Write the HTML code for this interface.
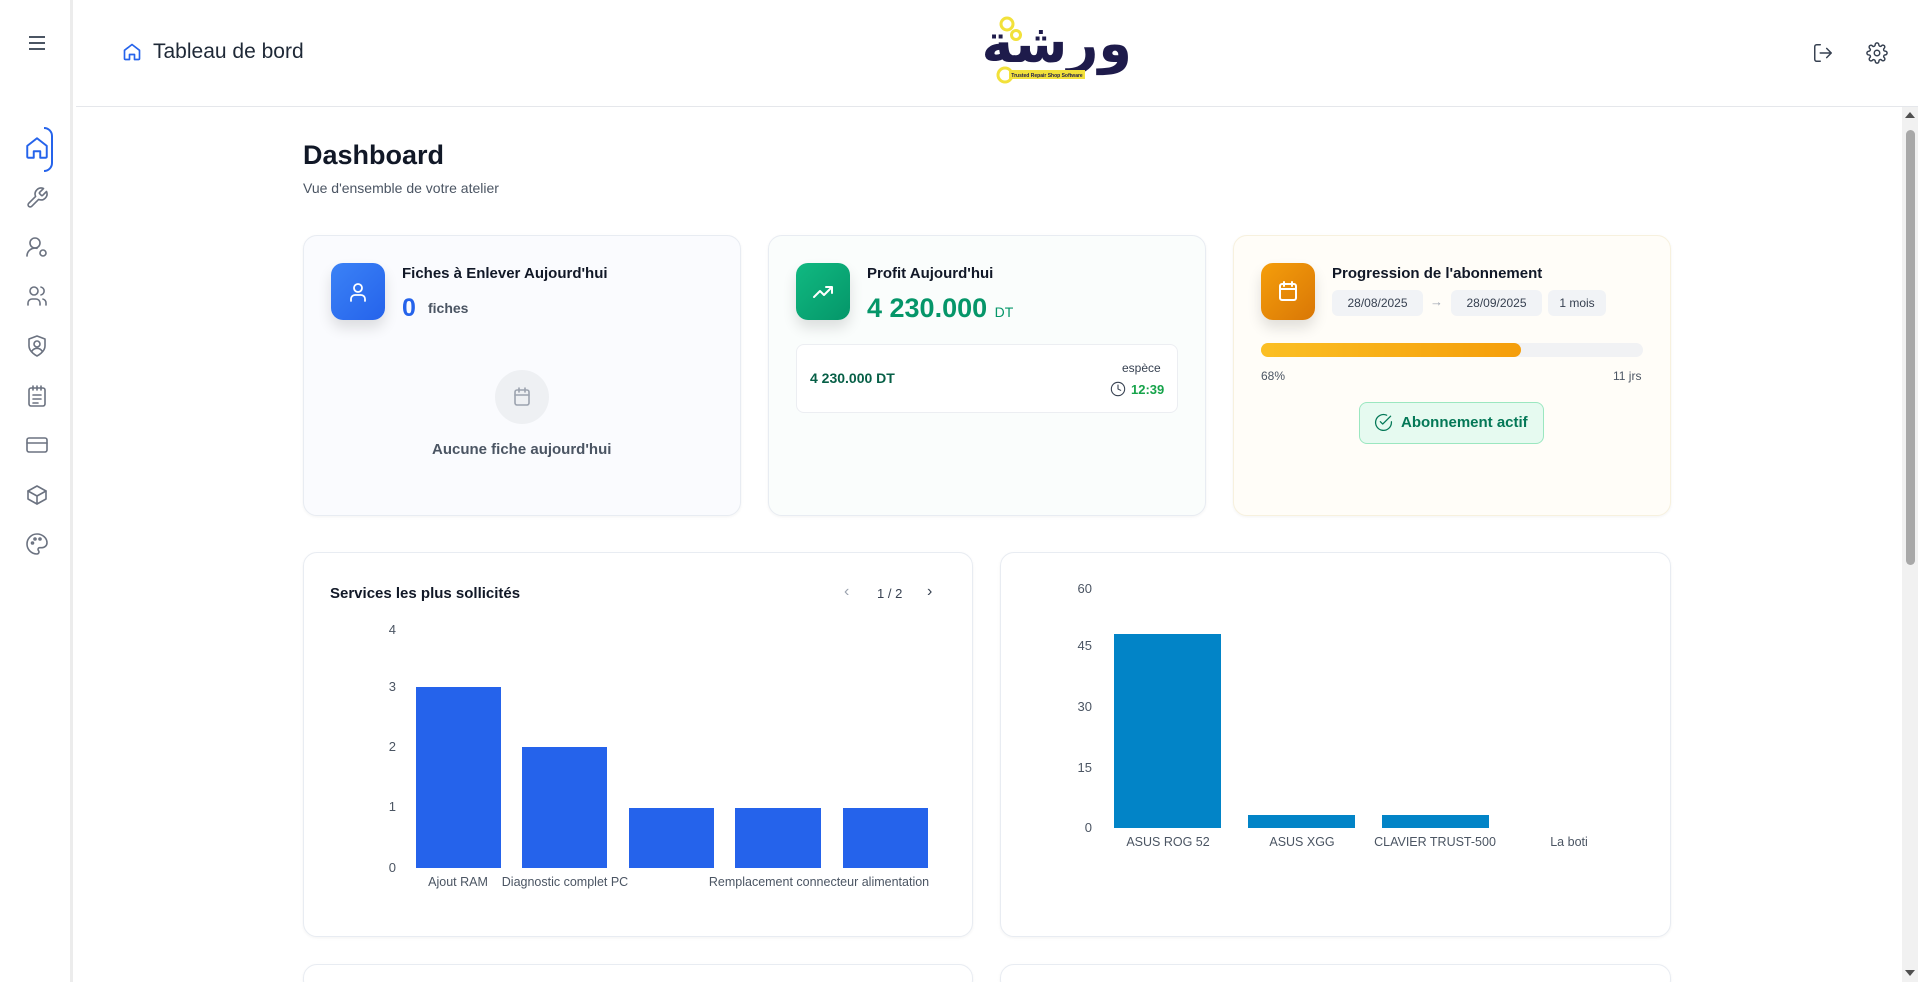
<!DOCTYPE html>
<html><head><meta charset="utf-8"><style>
*{box-sizing:border-box;margin:0;padding:0}
html{overflow:hidden;width:1918px;height:982px}
body{width:1918px;height:982px;overflow:hidden;background:#fff;font-family:"Liberation Sans",sans-serif;color:#111827;position:relative}
.abs{position:absolute}
.side{left:0;top:0;width:73px;height:982px;background:#fff;border-right:3px solid #ececec}
.hdr{left:76px;top:0;right:0;height:107px;border-bottom:1px solid #e5e7eb;background:#fff}
.ic{stroke:#6b7280;fill:none;stroke-width:1.6;stroke-linecap:round;stroke-linejoin:round}
.card{position:absolute;border:1px solid #e8ecf2;border-radius:14px;box-shadow:0 1px 3px rgba(0,0,0,.05)}
.sq{position:absolute;width:54px;height:57px;border-radius:12px;box-shadow:0 8px 14px rgba(0,0,0,.12)}
.t{position:absolute;font-size:15px;font-weight:bold;color:#111827;white-space:nowrap}
.chip{position:absolute;background:#f1f3f6;border-radius:6px;font-size:12px;color:#374151;height:26px;line-height:26px;text-align:center}
.yl{position:absolute;font-size:13px;color:#4b5563;text-align:right;width:20px}
.xl{position:absolute;font-size:12.5px;color:#4b5563;white-space:nowrap;transform:translateX(-50%)}
</style></head><body>
<div class="abs side">
<svg class="abs" style="left:28px;top:35px" width="18" height="16"><path d="M1 2h16M1 8h16M1 14h16" stroke="#4b5563" stroke-width="2"/></svg>
<svg class="abs" style="left:24px;top:135px" width="26" height="26" viewBox="0 0 24 24"><path d="M3 10l9-7 9 7v10a1 1 0 0 1-1 1h-5v-6h-6v6H4a1 1 0 0 1-1-1z" fill="none" stroke="#2563eb" stroke-width="1.8" stroke-linejoin="round"/></svg>
<div class="abs" style="left:44px;top:127px;width:9px;height:45px;border:2px solid #2563eb;border-left:none;border-radius:0 12px 12px 0"></div>
<svg class="abs ic" style="left:25px;top:186px" width="24" height="24" viewBox="0 0 24 24"><path d="M14.7 6.3a1 1 0 0 0 0 1.4l1.6 1.6a1 1 0 0 0 1.4 0l3.8-3.8a6 6 0 0 1-7.9 7.9l-6.9 6.9a2.1 2.1 0 0 1-3-3l6.9-6.9a6 6 0 0 1 7.9-7.9z"/></svg>
<svg class="abs ic" style="left:25px;top:235px" width="24" height="24" viewBox="0 0 24 24"><circle cx="10" cy="8" r="5"/><path d="M2 21a8 8 0 0 1 10-7.7"/><circle cx="18" cy="18" r="3"/></svg>
<svg class="abs ic" style="left:25px;top:284px" width="24" height="24" viewBox="0 0 24 24"><circle cx="9" cy="7" r="4"/><path d="M3 21v-2a4 4 0 0 1 4-4h4a4 4 0 0 1 4 4v2M16 3.1a4 4 0 0 1 0 7.8M21 21v-2a4 4 0 0 0-3-3.9"/></svg>
<svg class="abs ic" style="left:25px;top:334px" width="24" height="24" viewBox="0 0 24 24"><path d="M12 22s8-4 8-10V5l-8-3-8 3v7c0 6 8 10 8 10z"/><circle cx="12" cy="10" r="3"/><path d="M7 17a6 6 0 0 1 10 0"/></svg>
<svg class="abs ic" style="left:25px;top:384px" width="24" height="24" viewBox="0 0 24 24"><rect x="4" y="4" width="16" height="18" rx="2"/><path d="M8 2v4M12 2v4M16 2v4M8 11h8M8 15h8M8 19h5"/></svg>
<svg class="abs ic" style="left:25px;top:433px" width="24" height="24" viewBox="0 0 24 24"><rect x="2" y="5" width="20" height="14" rx="2"/><path d="M2 10h20"/></svg>
<svg class="abs ic" style="left:25px;top:483px" width="24" height="24" viewBox="0 0 24 24"><path d="M21 8l-9-5-9 5v8l9 5 9-5z"/><path d="M3 8l9 5 9-5M12 13v8"/></svg>
<svg class="abs ic" style="left:25px;top:532px" width="24" height="24" viewBox="0 0 24 24"><path d="M12 2a10 10 0 0 0 0 20c1 0 2-1 2-2 0-.5-.2-1-.5-1.3-.3-.4-.5-.8-.5-1.3 0-1 .8-1.7 1.7-1.7H17a5 5 0 0 0 5-5C22 6 17.5 2 12 2z"/><circle cx="7.5" cy="11" r="1"/><circle cx="10" cy="7" r="1"/><circle cx="15" cy="7" r="1"/></svg>
</div>
<div class="abs hdr"></div>
<svg class="abs" style="left:122px;top:42px" width="20" height="20" viewBox="0 0 24 24"><path d="M3 10l9-7 9 7v10a1 1 0 0 1-1 1h-5v-6h-6v6H4a1 1 0 0 1-1-1z" fill="none" stroke="#2563eb" stroke-width="2" stroke-linejoin="round"/></svg>
<div class="abs" style="left:153px;top:40px;font-size:21px;color:#1f2937">Tableau de bord</div>
<!-- logo -->
<div class="abs" style="left:992px;top:4px;width:140px;text-align:center;font-family:'DejaVu Sans',sans-serif;font-weight:bold;font-size:54px;line-height:80px;color:#1e1b4b;direction:rtl;white-space:nowrap">ورشة</div>
<svg class="abs" style="left:995px;top:14px" width="135" height="78">
<circle cx="12" cy="10" r="6" fill="none" stroke="#f2e13a" stroke-width="3"/><circle cx="21" cy="21" r="4.5" fill="none" stroke="#f2e13a" stroke-width="3"/>
<rect x="14" y="56" width="76" height="9" fill="#f2e13a"/>
<circle cx="10" cy="61" r="7" fill="none" stroke="#f2e13a" stroke-width="3"/>
<text x="52" y="63" font-size="5" font-weight="bold" fill="#1e1b4b" text-anchor="middle" font-family="Liberation Sans">Trusted Repair Shop Software</text>
</svg>
<svg class="abs ic" style="left:1812px;top:42px;stroke:#374151" width="22" height="22" viewBox="0 0 24 24"><path d="M9 21H5a2 2 0 0 1-2-2V5a2 2 0 0 1 2-2h4M16 17l5-5-5-5M21 12H9"/></svg>
<svg class="abs ic" style="left:1866px;top:42px;stroke:#374151" width="22" height="22" viewBox="0 0 24 24"><circle cx="12" cy="12" r="3"/><path d="M19.4 15a1.7 1.7 0 0 0 .3 1.8l.1.1a2 2 0 1 1-2.8 2.8l-.1-.1a1.7 1.7 0 0 0-1.8-.3 1.7 1.7 0 0 0-1 1.5V21a2 2 0 1 1-4 0v-.1a1.7 1.7 0 0 0-1.1-1.5 1.7 1.7 0 0 0-1.8.3l-.1.1a2 2 0 1 1-2.8-2.8l.1-.1a1.7 1.7 0 0 0 .3-1.8 1.7 1.7 0 0 0-1.5-1H3a2 2 0 1 1 0-4h.1a1.7 1.7 0 0 0 1.5-1.1 1.7 1.7 0 0 0-.3-1.8l-.1-.1a2 2 0 1 1 2.8-2.8l.1.1a1.7 1.7 0 0 0 1.8.3H9a1.7 1.7 0 0 0 1-1.5V3a2 2 0 1 1 4 0v.1a1.7 1.7 0 0 0 1 1.5 1.7 1.7 0 0 0 1.8-.3l.1-.1a2 2 0 1 1 2.8 2.8l-.1.1a1.7 1.7 0 0 0-.3 1.8V9a1.7 1.7 0 0 0 1.5 1H21a2 2 0 1 1 0 4h-.1a1.7 1.7 0 0 0-1.5 1z"/></svg>
<!-- scrollbar -->
<div class="abs" style="left:1902px;top:107px;width:16px;height:875px;background:#f1f1f1"></div>
<div class="abs" style="left:1906px;top:130px;width:9px;height:435px;background:#a8a8a8;border-radius:5px"></div>
<div class="abs" style="left:1905px;top:112px;width:0;height:0;border:5px solid transparent;border-bottom:6px solid #505050;border-top:none"></div>
<div class="abs" style="left:1905px;top:970px;width:0;height:0;border:5px solid transparent;border-top:6px solid #505050;border-bottom:none"></div>

<div class="abs" style="left:303px;top:140px;font-size:27px;font-weight:bold">Dashboard</div>
<div class="abs" style="left:303px;top:180px;font-size:14px;color:#4b5563">Vue d'ensemble de votre atelier</div>

<!-- card1 -->
<div class="card" style="left:303px;top:235px;width:438px;height:281px;background:#fafbfe"></div>
<div class="sq" style="left:331px;top:263px;background:linear-gradient(135deg,#3b82f6,#2563eb)"></div>
<svg class="abs" style="left:346px;top:280px" width="24" height="24" viewBox="0 0 24 24" fill="none" stroke="#fff" stroke-width="1.8" stroke-linecap="round"><circle cx="12" cy="8" r="4"/><path d="M5 21v-2a4 4 0 0 1 4-4h6a4 4 0 0 1 4 4v2"/></svg>
<div class="t" style="left:402px;top:265px">Fiches à Enlever Aujourd'hui</div>
<div class="abs" style="left:402px;top:294px;font-size:25px;font-weight:bold;color:#2563eb">0</div>
<div class="abs" style="left:428px;top:300px;font-size:14px;font-weight:bold;color:#4b5563">fiches</div>
<div class="abs" style="left:495px;top:370px;width:54px;height:54px;border-radius:50%;background:#eef0f3"></div>
<svg class="abs ic" style="left:510px;top:385px;stroke:#9ca3af" width="24" height="24" viewBox="0 0 24 24"><rect x="5" y="5" width="14" height="15" rx="2"/><path d="M9 3v4M15 3v4M5 10h14"/></svg>
<div class="abs" style="left:432px;top:441px;font-size:15px;font-weight:bold;color:#4b5563">Aucune fiche aujourd'hui</div>

<!-- card2 -->
<div class="card" style="left:768px;top:235px;width:438px;height:281px;background:#fafdfc"></div>
<div class="sq" style="left:796px;top:263px;background:linear-gradient(135deg,#10b981,#059669)"></div>
<svg class="abs" style="left:811px;top:280px" width="24" height="24" viewBox="0 0 24 24" fill="none" stroke="#fff" stroke-width="2" stroke-linecap="round" stroke-linejoin="round"><path d="M3 17l6-6 4 4 8-8M15 7h6v6"/></svg>
<div class="t" style="left:867px;top:265px">Profit Aujourd'hui</div>
<div class="abs" style="left:867px;top:293px;font-size:27px;font-weight:bold;color:#059669">4 230.000 <span style="font-size:14px;font-weight:normal">DT</span></div>
<div class="abs" style="left:796px;top:344px;width:382px;height:69px;background:#fff;border:1px solid #eceef2;border-radius:8px"></div>
<div class="abs" style="left:810px;top:370px;font-size:14px;font-weight:bold;color:#065f46">4 230.000 DT</div>
<div class="abs" style="left:1122px;top:361px;font-size:12px;color:#374151">espèce</div>
<svg class="abs ic" style="left:1110px;top:381px;stroke:#374151" width="16" height="16" viewBox="0 0 24 24"><circle cx="12" cy="12" r="10"/><path d="M12 6v6l4 2"/></svg>
<div class="abs" style="left:1131px;top:382px;font-size:13px;font-weight:bold;color:#16a34a">12:39</div>

<!-- card3 -->
<div class="card" style="left:1233px;top:235px;width:438px;height:281px;background:#fffdf8;border-color:#f7f1de"></div>
<div class="sq" style="left:1261px;top:263px;background:linear-gradient(135deg,#f59e0b,#d97706)"></div>
<svg class="abs" style="left:1276px;top:279px" width="24" height="24" viewBox="0 0 24 24" fill="none" stroke="#fff" stroke-width="2" stroke-linecap="round"><rect x="4" y="5" width="16" height="16" rx="2"/><path d="M8 3v4M16 3v4M4 10h16"/></svg>
<div class="t" style="left:1332px;top:265px">Progression de l'abonnement</div>
<div class="chip" style="left:1332px;top:290px;width:91px">28/08/2025</div>
<div class="abs" style="left:1430px;top:294px;font-size:13px;color:#9ca3af">→</div>
<div class="chip" style="left:1451px;top:290px;width:91px">28/09/2025</div>
<div class="chip" style="left:1548px;top:290px;width:58px">1 mois</div>
<div class="abs" style="left:1261px;top:343px;width:382px;height:14px;background:#f1f2f4;border-radius:7px"></div>
<div class="abs" style="left:1261px;top:343px;width:260px;height:14px;background:linear-gradient(90deg,#fbbf24,#f59e0b);border-radius:7px"></div>
<div class="abs" style="left:1261px;top:369px;font-size:12px;color:#4b5563">68%</div>
<div class="abs" style="left:1613px;top:369px;font-size:12px;color:#4b5563">11 jrs</div>
<div class="abs" style="left:1359px;top:402px;width:185px;height:42px;background:#e6faf0;border:1px solid #9be7c0;border-radius:8px"></div>
<svg class="abs ic" style="left:1374px;top:413px;stroke:#047857" width="19" height="19" viewBox="0 0 24 24"><path d="M22 11v1a10 10 0 1 1-6-9.2"/><path d="M8 11l3 3 10-10"/></svg>
<div class="abs" style="left:1401px;top:414px;font-size:15px;font-weight:bold;color:#047857">Abonnement actif</div>

<!-- chart1 -->
<div class="card" style="left:303px;top:552px;width:670px;height:385px;background:#fff"></div>
<div class="t" style="left:330px;top:585px;font-size:15px">Services les plus sollicités</div>
<div class="abs" style="left:844px;top:583px;font-size:16px;color:#9ca3af">‹</div>
<div class="abs" style="left:877px;top:586px;font-size:13px;color:#374151">1 / 2</div>
<div class="abs" style="left:927px;top:583px;font-size:16px;color:#374151">›</div>
<div class="yl" style="left:376px;top:622px">4</div>
<div class="yl" style="left:376px;top:679px">3</div>
<div class="yl" style="left:376px;top:739px">2</div>
<div class="yl" style="left:376px;top:799px">1</div>
<div class="yl" style="left:376px;top:860px">0</div>
<div class="abs" style="left:416px;top:687px;width:85px;height:181px;background:#2563eb"></div>
<div class="abs" style="left:522px;top:747px;width:85px;height:121px;background:#2563eb"></div>
<div class="abs" style="left:629px;top:808px;width:85px;height:60px;background:#2563eb"></div>
<div class="abs" style="left:735px;top:808px;width:86px;height:60px;background:#2563eb"></div>
<div class="abs" style="left:843px;top:808px;width:85px;height:60px;background:#2563eb"></div>
<div class="xl" style="left:458px;top:875px">Ajout RAM</div>
<div class="xl" style="left:565px;top:875px">Diagnostic complet PC</div>
<div class="xl" style="left:819px;top:875px">Remplacement connecteur alimentation</div>

<!-- chart2 -->
<div class="card" style="left:1000px;top:552px;width:671px;height:385px;background:#fff"></div>
<div class="yl" style="left:1072px;top:581px">60</div>
<div class="yl" style="left:1072px;top:638px">45</div>
<div class="yl" style="left:1072px;top:699px">30</div>
<div class="yl" style="left:1072px;top:760px">15</div>
<div class="yl" style="left:1072px;top:820px">0</div>
<div class="abs" style="left:1114px;top:634px;width:107px;height:194px;background:#0284c7"></div>
<div class="abs" style="left:1248px;top:815px;width:107px;height:13px;background:#0284c7"></div>
<div class="abs" style="left:1382px;top:815px;width:107px;height:13px;background:#0284c7"></div>
<div class="xl" style="left:1168px;top:835px">ASUS ROG 52</div>
<div class="xl" style="left:1302px;top:835px">ASUS XGG</div>
<div class="xl" style="left:1435px;top:835px">CLAVIER TRUST-500</div>
<div class="xl" style="left:1569px;top:835px">La boti</div>

<div class="card" style="left:303px;top:964px;width:670px;height:30px;background:#fff"></div>
<div class="card" style="left:1000px;top:964px;width:671px;height:30px;background:#fff"></div>
</body></html>
